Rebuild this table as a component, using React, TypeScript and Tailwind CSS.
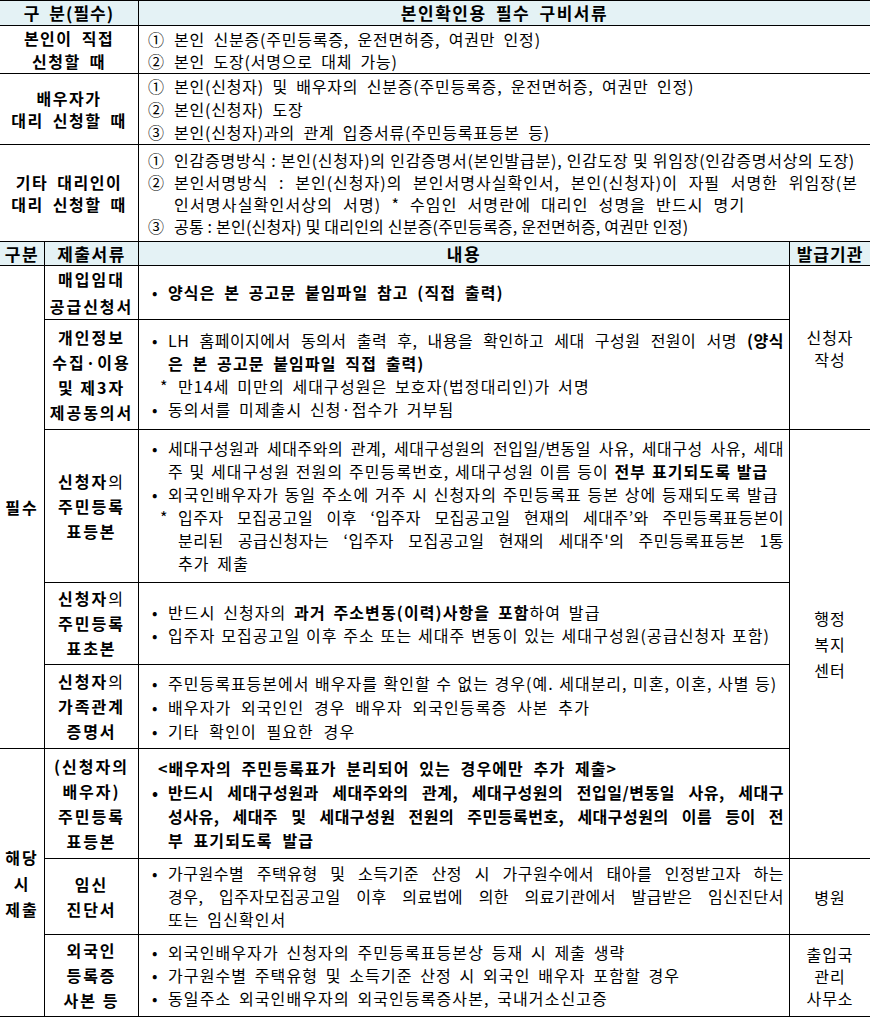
import type { ReactNode } from "react";

type LineProps = {
  mark?: ReactNode;
  mw?: string;
  pl?: string;
  j?: boolean;
  cls?: string;
  children: ReactNode;
};

// one visual line of a cell; j = justified to the cell edge
function Line({ mark, mw = "w-[16px]", pl = "", j = false, cls = "", children }: LineProps) {
  return (
    <div className={`flex ${pl}`}>
      {mark !== undefined && <span className={`shrink-0 tracking-normal ${mw}`}>{mark}</span>}
      <div
        className={`min-w-0 flex-1 ${
          j ? "text-justify [text-align-last:justify] tracking-[0.5px] [word-spacing:0px]" : "whitespace-nowrap"
        } ${cls}`}
      >
        {children}
      </div>
    </div>
  );
}

const head = "bg-[#e4f2f5] border-b border-black flex items-center justify-center font-bold text-[17px] tracking-[1.5px] [word-spacing:4px]";
const label = "border-b border-r border-black flex flex-col items-center justify-center text-center font-bold text-[16px] leading-[25px] tracking-[2px]";
const body = "border-b border-r border-black flex flex-col justify-center pl-[13px] pr-[5px] text-[16px] leading-[23px] tracking-[1.1px] [word-spacing:3px]";
const issuer = "border-b border-black flex flex-col items-center justify-center text-center text-[16px] tracking-[1px]";

function TopTable() {
  const lab = "border-b border-r border-black flex flex-col items-center justify-center text-center font-bold text-[16px] tracking-[1.5px] [word-spacing:4px]";
  const cont = "border-b border-black flex flex-col justify-center pl-[9px] pr-[12px] text-[16px] tracking-[0.8px] [word-spacing:4px]";
  return (
    <div className="grid grid-cols-[139px_731px] grid-rows-[25px_48px_71px_97px] border-t border-black">
      <div className={`${head} border-r tracking-[1px]`}>구 분(필수)</div>
      <div className={head}>본인확인용 필수 구비서류</div>

      <div className={`${lab} leading-[23px]`}>
        <div>본인이 직접</div>
        <div>신청할 때</div>
      </div>
      <div className={`${cont} leading-[22px]`}>
        <Line mark="①" mw="w-[26px]">본인 신분증(주민등록증, 운전면허증, 여권만 인정)</Line>
        <Line mark="②" mw="w-[26px]">본인 도장(서명으로 대체 가능)</Line>
      </div>

      <div className={`${lab} leading-[22px]`}>
        <div>배우자가</div>
        <div>대리 신청할 때</div>
      </div>
      <div className={`${cont} leading-[23px]`}>
        <Line mark="①" mw="w-[26px]">본인(신청자) 및 배우자의 신분증(주민등록증, 운전면허증, 여권만 인정)</Line>
        <Line mark="②" mw="w-[26px]">본인(신청자) 도장</Line>
        <Line mark="③" mw="w-[26px]">본인(신청자)과의 관계 입증서류(주민등록표등본 등)</Line>
      </div>

      <div className={`${lab} leading-[22px]`}>
        <div>기타 대리인이</div>
        <div>대리 신청할 때</div>
      </div>
      <div className={`${cont} leading-[22px]`}>
        <Line mark="①" mw="w-[26px]" cls="[word-spacing:0px] tracking-[0.75px]">
          인감증명방식 : 본인(신청자)의 인감증명서(본인발급분), 인감도장 및 위임장(인감증명서상의 도장)
        </Line>
        <Line mark="②" mw="w-[26px]" j cls="tracking-[1px]">
          본인서명방식 : 본인(신청자)의 본인서명사실확인서, 본인(신청자)이 자필 서명한 위임장(본
        </Line>
        <Line pl="pl-[26px]" cls="[word-spacing:5px] tracking-[1.2px]">
          인서명사실확인서상의 서명)<span className="ml-[10px]">*</span> 수임인 서명란에 대리인 성명을 반드시 명기
        </Line>
        <Line mark="③" mw="w-[26px]" cls="[word-spacing:0px] tracking-[0.2px]">
          공통 : 본인(신청자) 및 대리인의 신분증(주민등록증, 운전면허증, 여권만 인정)
        </Line>
      </div>
    </div>
  );
}

function DocTable() {
  return (
    <div className="grid grid-cols-[45px_94px_651px_80px] grid-rows-[24px_54px_110px_153px_82px_84px_110px_76px_82px]">
      <div className={`${head} border-r tracking-[0px]`}>구분</div>
      <div className={`${head} border-r`}>제출서류</div>
      <div className={`${head} border-r`}>내용</div>
      <div className={`${head} tracking-[1px]`}>발급기관</div>

      <div className={`${label} col-start-1 row-start-2 row-span-5 tracking-[0px]`}>필수</div>
      <div className={`${label} col-start-1 row-start-7 row-span-3 leading-[26px] tracking-[0px]`}>
        <div>해당</div>
        <div>시</div>
        <div>제출</div>
      </div>

      {/* 매입임대 공급신청서 */}
      <div className={`${label} col-start-2 row-start-2 leading-[27px]`}>
        <div>매입임대</div>
        <div>공급신청서</div>
      </div>
      <div className={`${body} col-start-3 row-start-2`}>
        <Line mark="•" cls="font-bold [word-spacing:4px]">양식은 본 공고문 붙임파일 참고 (직접 출력)</Line>
      </div>

      {/* 개인정보 동의서 */}
      <div className={`${label} col-start-2 row-start-3`}>
        <div>개인정보</div>
        <div>수집·이용</div>
        <div>및 제3자</div>
        <div>제공동의서</div>
      </div>
      <div className={`${body} col-start-3 row-start-3`}>
        <Line mark="•" j>
          LH 홈페이지에서 동의서 출력 후, 내용을 확인하고 세대 구성원 전원이 서명 <b>(양식</b>
        </Line>
        <Line pl="pl-[16px]" cls="font-bold [word-spacing:4px]">은 본 공고문 붙임파일 직접 출력)</Line>
        <Line mark="*" mw="w-[18px]" pl="pl-[8px]">만14세 미만의 세대구성원은 보호자(법정대리인)가 서명</Line>
        <Line mark="•">동의서를 미제출시 신청·접수가 거부됨</Line>
      </div>

      {/* 주민등록표등본 */}
      <div className={`${label} col-start-2 row-start-4 leading-[24px]`}>
        <div>
          신청자<span className="font-normal">의</span>
        </div>
        <div>주민등록</div>
        <div>표등본</div>
      </div>
      <div className={`${body} col-start-3 row-start-4`}>
        <Line mark="•" j>
          세대구성원과 세대주와의 관계, 세대구성원의 전입일/변동일 사유, 세대구성 사유, 세대
        </Line>
        <Line pl="pl-[16px]" cls="[word-spacing:1px]">
          주 및 세대구성원 전원의 주민등록번호, 세대구성원 이름 등이 <b>전부 표기되도록 발급</b>
        </Line>
        <Line mark="•" cls="[word-spacing:1px]">
          외국인배우자가 동일 주소에 거주 시 신청자의 주민등록표 등본 상에 등재되도록 발급
        </Line>
        <Line mark="*" mw="w-[18px]" pl="pl-[8px]" j>
          입주자 모집공고일 이후 ‘입주자 모집공고일 현재의 세대주’와 주민등록표등본이
        </Line>
        <Line pl="pl-[26px]" j>
          분리된 공급신청자는 ‘입주자 모집공고일 현재의 세대주'의 주민등록표등본 1통
        </Line>
        <Line pl="pl-[26px]">추가 제출</Line>
      </div>

      {/* 주민등록표초본 */}
      <div className={`${label} col-start-2 row-start-5 leading-[24px]`}>
        <div>
          신청자<span className="font-normal">의</span>
        </div>
        <div>주민등록</div>
        <div>표초본</div>
      </div>
      <div className={`${body} col-start-3 row-start-5 leading-[22px]`}>
        <Line mark="•">
          반드시 신청자의 <b>과거 주소변동(이력)사항을 포함</b>하여 발급
        </Line>
        <Line mark="•" cls="[word-spacing:1px]">
          입주자 모집공고일 이후 주소 또는 세대주 변동이 있는 세대구성원(공급신청자 포함)
        </Line>
      </div>

      {/* 가족관계증명서 */}
      <div className={`${label} col-start-2 row-start-6`}>
        <div>
          신청자<span className="font-normal">의</span>
        </div>
        <div>가족관계</div>
        <div>증명서</div>
      </div>
      <div className={`${body} col-start-3 row-start-6 leading-[24px]`}>
        <Line mark="•" cls="[word-spacing:1px] tracking-[1px]">
          주민등록표등본에서 배우자를 확인할 수 없는 경우(예. 세대분리, 미혼, 이혼, 사별 등)
        </Line>
        <Line mark="•" cls="[word-spacing:5px]">배우자가 외국인인 경우 배우자 외국인등록증 사본 추가</Line>
        <Line mark="•" cls="[word-spacing:5px]">기타 확인이 필요한 경우</Line>
      </div>

      {/* 배우자 주민등록표등본 */}
      <div className={`${label} col-start-2 row-start-7 leading-[25px]`}>
        <div>(신청자의</div>
        <div>배우자)</div>
        <div>주민등록</div>
        <div>표등본</div>
      </div>
      <div className={`${body} col-start-3 row-start-7 font-bold leading-[24px]`}>
        <Line pl="pl-[6px]" cls="[word-spacing:5px]">&lt;배우자의 주민등록표가 분리되어 있는 경우에만 추가 제출&gt;</Line>
        <Line mark="•" j>
          반드시 세대구성원과 세대주와의 관계, 세대구성원의 전입일/변동일 사유, 세대구
        </Line>
        <Line pl="pl-[16px]" j>
          성사유, 세대주 및 세대구성원 전원의 주민등록번호, 세대구성원의 이름 등이 전
        </Line>
        <Line pl="pl-[16px]" cls="[word-spacing:5px]">부 표기되도록 발급</Line>
      </div>

      {/* 임신진단서 */}
      <div className={`${label} col-start-2 row-start-8`}>
        <div>임신</div>
        <div>진단서</div>
      </div>
      <div className={`${body} col-start-3 row-start-8 leading-[22px]`}>
        <Line mark="•" j>
          가구원수별 주택유형 및 소득기준 산정 시 가구원수에서 태아를 인정받고자 하는
        </Line>
        <Line pl="pl-[16px]" j>
          경우, 입주자모집공고일 이후 의료법에 의한 의료기관에서 발급받은 임신진단서
        </Line>
        <Line pl="pl-[16px]">또는 임신확인서</Line>
      </div>

      {/* 외국인등록증 */}
      <div className={`${label} col-start-2 row-start-9 leading-[24px]`}>
        <div>외국인</div>
        <div>등록증</div>
        <div>사본 등</div>
      </div>
      <div className={`${body} col-start-3 row-start-9 leading-[22.5px]`}>
        <Line mark="•">외국인배우자가 신청자의 주민등록표등본상 등재 시 제출 생략</Line>
        <Line mark="•">가구원수별 주택유형 및 소득기준 산정 시 외국인 배우자 포함할 경우</Line>
        <Line mark="•">동일주소 외국인배우자의 외국인등록증사본, 국내거소신고증</Line>
      </div>

      {/* 발급기관 */}
      <div className={`${issuer} col-start-4 row-start-2 row-span-2 leading-[22px]`}>
        <div>신청자</div>
        <div>작성</div>
      </div>
      <div className={`${issuer} col-start-4 row-start-4 row-span-4 leading-[26px]`}>
        <div>행정</div>
        <div>복지</div>
        <div>센터</div>
      </div>
      <div className={`${issuer} col-start-4 row-start-8`}>병원</div>
      <div className={`${issuer} col-start-4 row-start-9 leading-[22px]`}>
        <div>출입국</div>
        <div>관리</div>
        <div>사무소</div>
      </div>
    </div>
  );
}

export default function App() {
  return (
    <div className="w-[870px] bg-white text-black font-['Noto_Sans_CJK_KR','Noto_Sans',sans-serif]">
      <TopTable />
      <DocTable />
    </div>
  );
}
